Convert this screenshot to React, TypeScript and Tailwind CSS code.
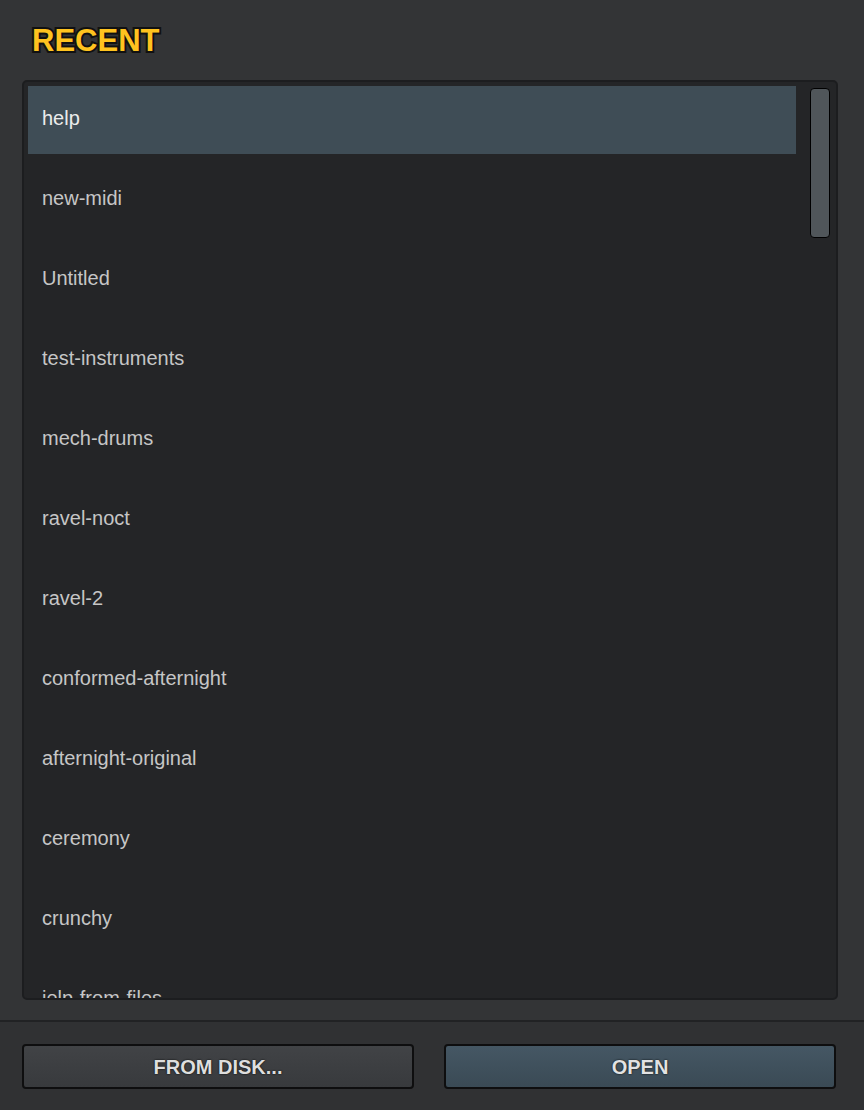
const recent = [
  'help',
  'new-midi',
  'Untitled',
  'test-instruments',
  'mech-drums',
  'ravel-noct',
  'ravel-2',
  'conformed-afternight',
  'afternight-original',
  'ceremony',
  'crunchy',
  'jelp-from-files',
];

export default function App() {
  const selected = 0;

  return (
    <main className="h-[1110px] w-full flex flex-col bg-[#333436] font-['Liberation_Sans',Arial,sans-serif] overflow-hidden">
      {/* Header */}
      <header className="pt-[26px] pb-[24px] pl-[32px]">
        <h1 className="text-[31px] leading-[30px] font-bold text-[#ffc31f] [paint-order:stroke_fill] [-webkit-text-stroke:4px_#111111]">
          RECENT
        </h1>
      </header>

      {/* Recent list */}
      <section className="ml-[22px] mr-[26px] h-[920px] shrink-0 flex p-[4px] border-2 border-[#1c1d1f] rounded-[5px] bg-[#242527] overflow-hidden">
        <ul className="flex-1 flex flex-col gap-[12px]">
          {recent.map((name, i) => (
            <li
              key={name}
              className={`h-[68px] shrink-0 flex items-center pl-[14px] pb-[4px] text-[20px] ${
                i === selected ? 'bg-[#3f4d56] text-[#ececec]' : 'text-[#c6c6c6]'
              }`}
            >
              {name}
            </li>
          ))}
        </ul>
        <div className="w-[20px] ml-[14px] mr-[2px] mt-[2px]">
          <div className="h-[150px] rounded-[4px] border border-black bg-[#50565a]" />
        </div>
      </section>

      <div className="h-[20px] shrink-0" />

      {/* Footer actions */}
      <footer className="flex-1 border-t-2 border-[#212224] bg-[#303133] flex gap-[30px] pl-[22px] pr-[28px] pt-[22px]">
        <button className="flex-1 h-[45px] rounded-[4px] border-2 border-[#0e0e0f] bg-gradient-to-b from-[#414346] to-[#383a3d] text-[20px] font-bold text-[#dedede] [text-shadow:0_0_2px_#000]">
          FROM DISK...
        </button>
        <button className="flex-1 h-[45px] rounded-[4px] border-2 border-[#0e0e0f] bg-gradient-to-b from-[#455764] to-[#3a4a55] text-[20px] font-bold text-[#e2e2e2] [text-shadow:0_0_2px_#000]">
          OPEN
        </button>
      </footer>
    </main>
  );
}
